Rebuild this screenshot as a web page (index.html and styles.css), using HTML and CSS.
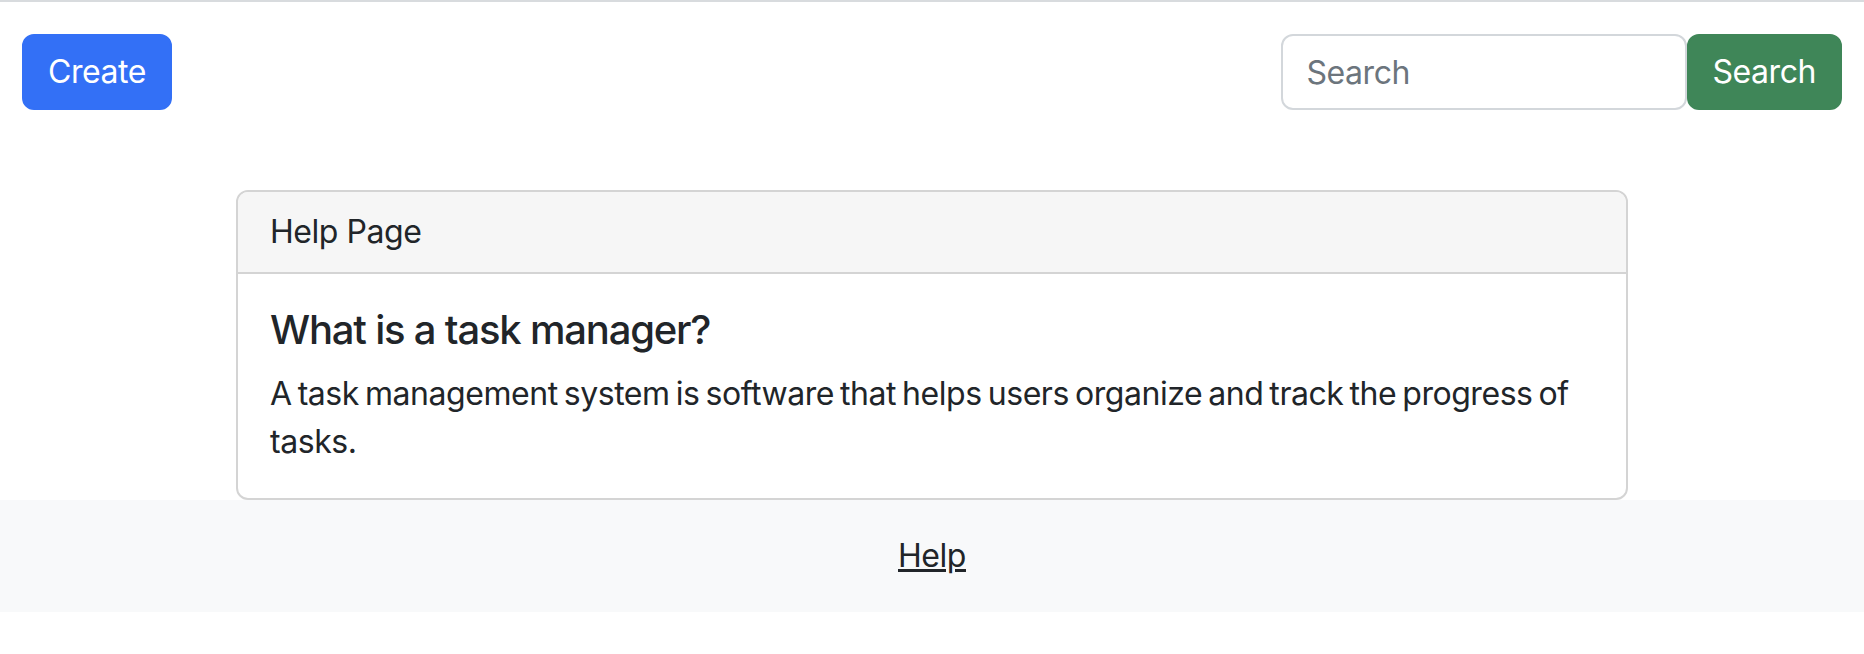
FILE: index.html
```html
<!DOCTYPE html>
<html lang="en">
<head>
<meta charset="utf-8">
<title>Help</title>
<link rel="stylesheet" href="styles.css">
</head>
<body>
<div class="topline"></div>
<nav class="navbar">
  <a class="btn btn-primary" href="#">Create</a>
  <form class="search">
    <input class="search-input" type="text" placeholder="Search">
    <button class="btn btn-success" type="button">Search</button>
  </form>
</nav>
<main class="container">
  <div class="card">
    <div class="card-header">Help Page</div>
    <div class="card-body">
      <h5 class="card-title">What is a task manager?</h5>
      <p class="card-text">A task management system is software that helps users organize and track the progress of tasks.</p>
    </div>
  </div>
</main>
<footer class="footer">
  <a class="footer-link" href="#">Help</a>
</footer>
</body>
</html>
```
FILE: styles.css
```css
* { box-sizing: border-box; }
html, body { margin: 0; padding: 0; background: #fff; }
body {
  font-family: Inter, "Noto Sans", "Liberation Sans", sans-serif;
  font-size: 32px;
  line-height: 48px;
  letter-spacing: -0.45px;
  color: #212529;
}
.topline { height: 2px; background: #d8dbde; }
.navbar {
  display: flex;
  justify-content: space-between;
  align-items: center;
  padding: 32px 22px 32px 22px;
}
.btn {
  display: inline-block;
  font-family: inherit;
  font-size: 32px;
  line-height: 48px;
  letter-spacing: -0.45px;
  padding: 12px 24px;
  border: 2px solid transparent;
  border-radius: 12px;
  color: #fff;
  text-decoration: none;
  cursor: pointer;
}
.btn-primary { background: #3370f6; border-color: #3370f6; }
.btn-success { background: #3f8658; border-color: #3f8658; }
.search { display: flex; align-items: center; margin: 0; }
.search-input {
  width: 406px;
  height: 76px;
  font-family: inherit;
  font-size: 32px;
  line-height: 48px;
  letter-spacing: -0.45px;
  padding: 12px 24px;
  border: 2px solid #d3d7db;
  border-radius: 12px;
  color: #212529;
  outline: none;
}
.search-input::placeholder { color: #6c757d; }
.container {
  width: 1392px;
  margin: 48px auto 0;
}
.card {
  border: 2px solid #d4d4d4;
  border-radius: 12px;
  overflow: hidden;
}
.card-header {
  background: #f6f6f6;
  padding: 16px 32px;
  border-bottom: 2px solid #d4d4d4;
}
.card-body { padding: 32px; }
.card-title {
  margin: 0 0 16px;
  font-size: 40px;
  line-height: 48px;
  font-weight: 500;
  letter-spacing: -1.2px;
}
.card-text { margin: 0; word-spacing: -2.5px; }
.footer {
  background: #f8f9fa;
  padding: 32px 0;
  text-align: center;
}
.footer-link { color: #212529; text-decoration: underline; }
```
